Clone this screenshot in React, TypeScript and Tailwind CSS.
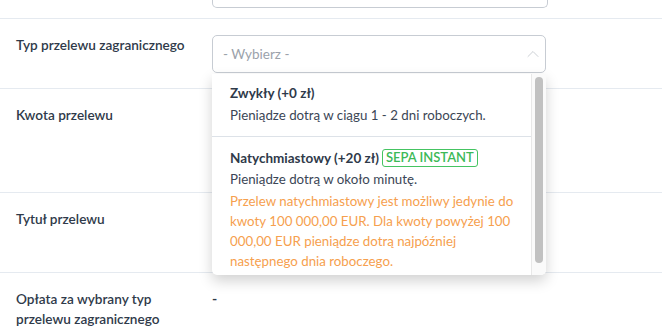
import { ChevronUp } from 'lucide-react';

const labelCls = 'text-[13.6px] leading-5 font-semibold text-[#2f3a4a]';

function Row({ label, children, className = '' }: { label: React.ReactNode; children?: React.ReactNode; className?: string }) {
  return (
    <div className={`flex border-t border-[#e5eaf0] ${className}`}>
      <div className="w-[212px] shrink-0 pl-4 pr-4 pt-4">
        <div className={labelCls}>{label}</div>
      </div>
      <div className="w-[334px] shrink-0">{children}</div>
    </div>
  );
}

export default function App() {
  return (
    <div className="w-[662px] h-[329px] overflow-hidden bg-white" style={{ fontFamily: 'Lato, "Noto Sans", sans-serif' }}>
      {/* previous field, cut off */}
      <div className="h-[18px] flex">
        <div className="w-[212px] shrink-0" />
        <div className="w-[336px] h-[8px] border-x border-b border-[#c7ccd3] rounded-b-[5px]" />
      </div>

      <Row label="Typ przelewu zagranicznego" className="h-[70px]">
        <div className="relative pt-4">
          <div className="h-[38px] flex items-center justify-between pl-[10px] pr-[2px] border border-[#c7ccd3] rounded-[5px] bg-white">
            <span className="text-[13.5px] text-[#9ba2ab]">- Wybierz -</span>
            <ChevronUp className="w-[20px] h-[20px] text-[#cdd1d6]" strokeWidth={1.2} />
          </div>

          <div className="absolute left-0 top-[55px] z-10 w-[334px] h-[201px] bg-white rounded-b-[5px] shadow-[0_6px_14px_rgba(0,0,0,0.18)] flex overflow-hidden">
            <div className="flex-1">
              <div className="pl-[18px] pr-3 pt-[9px] pb-[11px] border-b border-[#dde2e8]">
                <div className="text-[13.5px] leading-5 font-bold text-[#2f3a4a]">Zwykły (+0 zł)</div>
                <div className="mt-[2px] text-[13.3px] leading-5 text-[#3b4656]">Pieniądze dotrą w ciągu 1 - 2 dni roboczych.</div>
              </div>
              <div className="pl-[18px] pr-1 pt-[11px]">
                <div className="flex items-center gap-[3px]">
                  <span className="text-[13.5px] leading-5 font-bold text-[#2f3a4a]">Natychmiastowy (+20 zł)</span>
                  <span className="px-[3px] h-[18px] flex items-center border border-[#45c462] rounded-[3px] text-[13px] font-semibold text-[#3cb957]">SEPA INSTANT</span>
                </div>
                <div className="mt-[1px] text-[13.3px] leading-5 text-[#3b4656]">Pieniądze dotrą w około minutę.</div>
                <div className="mt-[2px] text-[13.3px] leading-5 text-[#f6a04e] whitespace-nowrap">
                  Przelew natychmiastowy jest możliwy jedynie do<br />
                  kwoty 100 000,00 EUR. Dla kwoty powyżej 100<br />
                  000,00 EUR pieniądze dotrą najpóźniej<br />
                  następnego dnia roboczego.
                </div>
              </div>
            </div>
            <div className="w-[15px] shrink-0 border-l border-[#e8e8e8] bg-[#fafafa] pt-[3px] pl-[3px]">
              <div className="w-[8px] h-[186px] rounded-full bg-[#c1c1c1]" />
            </div>
          </div>
        </div>
      </Row>

      <Row label="Kwota przelewu" className="h-[104px]" />
      <Row label="Tytuł przelewu" className="h-[80px]" />
      <Row label={<>Opłata za wybrany typ<br />przelewu zagranicznego</>} className="h-[70px]">
        <div className="pt-4 text-[14px] leading-5 font-bold text-[#2f3a4a]">-</div>
      </Row>
    </div>
  );
}
